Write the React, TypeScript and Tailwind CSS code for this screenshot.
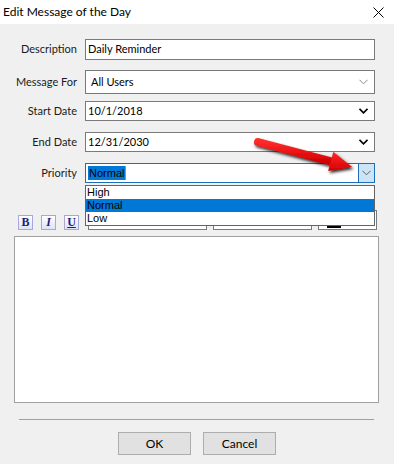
import React from 'react';

const ui = "font-['Lato',sans-serif]";
const swing = "font-['Liberation_Sans',Arial,sans-serif]";

function Chevron({ tone }: { tone: 'light' | 'bold' | 'mid' }) {
  const stroke = tone === 'bold' ? '#000' : tone === 'mid' ? '#606060' : '#8a8a8a';
  const width = tone === 'bold' ? 1.6 : 1;
  return (
    <svg width="9" height="6" viewBox="0 0 9 6" className="shrink-0">
      <path d="M0.5 0.8 L4.5 4.8 L8.5 0.8" fill="none" stroke={stroke} strokeWidth={width} />
    </svg>
  );
}

function Label({ children }: { children: React.ReactNode }) {
  return <div className="w-[78px] pr-[1px] text-right text-[11px] text-[#1a1a1a]">{children}</div>;
}

function FormatButton({ children, className }: { children: React.ReactNode; className?: string }) {
  return (
    <div
      className={`w-[15px] h-[15px] flex items-center justify-center border border-[#a8a8d8] bg-gradient-to-b from-white to-[#dfe3f5] text-[12px] leading-none text-[#1c1c80] font-['Liberation_Serif',serif] font-bold ${className ?? ''}`}
    >
      {children}
    </div>
  );
}

function RedArrow() {
  return (
    <svg width="120" height="50" viewBox="0 0 120 50" className="absolute left-[250px] top-[130px] z-20 pointer-events-none">
      <defs>
        <filter id="arrowShadow" x="-20%" y="-40%" width="140%" height="180%">
          <feDropShadow dx="1.5" dy="2" stdDeviation="1.6" floodColor="#000" floodOpacity="0.85" />
        </filter>
        <linearGradient id="arrowFill" x1="0" y1="0" x2="0" y2="1">
          <stop offset="0" stopColor="#ff2a2a" />
          <stop offset="1" stopColor="#d40000" />
        </linearGradient>
      </defs>
      <g filter="url(#arrowShadow)">
        <line x1="8" y1="12" x2="81" y2="31.4" stroke="url(#arrowFill)" strokeWidth="8" strokeLinecap="round" />
        <polygon points="83.3,21.7 102,37 78.2,41 " fill="url(#arrowFill)" />
      </g>
    </svg>
  );
}

export default function App() {
  return (
    <div className={`relative w-[394px] h-[464px] overflow-hidden bg-[#f0f0f0] ${ui}`}>
      {/* title bar */}
      <div className="h-[24px] bg-white flex items-center justify-between pl-[3px] pr-[10px]">
        <span className="text-[12px] text-black">Edit Message of the Day</span>
        <svg width="11" height="11" viewBox="0 0 11 11">
          <path d="M0.5 0.5 L10.5 10.5 M10.5 0.5 L0.5 10.5" stroke="#000" strokeWidth="1" />
        </svg>
      </div>

      {/* form rows */}
      <div className="flex flex-col pt-[15px]">
        <div className="flex items-center gap-[7px]">
          <Label>Description</Label>
          <div className="w-[290px] h-[21px] bg-white border border-[#7a7a7a] flex items-center pl-[2px] text-[11px] text-black">
            Daily Reminder
          </div>
        </div>

        <div className="flex items-center gap-[7px] mt-[10px]">
          <Label>Message For</Label>
          <div className="w-[290px] h-[24px] bg-white border border-[#7a7a7a] flex items-center justify-between pl-[5px] pr-[6px] text-[11px] text-black">
            <span>All Users</span>
            <Chevron tone="light" />
          </div>
        </div>

        <div className="flex items-center gap-[7px] mt-[7px]">
          <Label>Start Date</Label>
          <div className="w-[290px] h-[20px] bg-white border border-[#7a7a7a] flex items-center justify-between pl-[2px] pr-[6px] text-[11px] text-black">
            <span>10/1/2018</span>
            <Chevron tone="bold" />
          </div>
        </div>

        <div className="flex items-center gap-[7px] mt-[11px]">
          <Label>End Date</Label>
          <div className="w-[290px] h-[20px] bg-white border border-[#7a7a7a] flex items-center justify-between pl-[2px] pr-[6px] text-[11px] text-black">
            <span>12/31/2030</span>
            <Chevron tone="bold" />
          </div>
        </div>

        <div className="flex items-center gap-[7px] mt-[11px]">
          <Label>Priority</Label>
          <div className="relative w-[290px] h-[20px]">
            <div className="h-full bg-white border border-[#1f6fb8] flex items-stretch">
              <div className={`flex-1 flex items-center pl-[2px] text-[11px] ${swing}`}>
                <span className="bg-[#0078d7] text-black leading-[14px] px-[1px] border-r border-[#e08040]">Normal</span>
              </div>
              <div className="w-[16px] bg-[#cce4f7] border-l border-[#1f6fb8] flex items-center justify-center">
                <Chevron tone="mid" />
              </div>
            </div>
            {/* open list */}
            <div className={`absolute left-0 top-[22px] z-10 w-[290px] bg-white border border-[#646464] text-[11px] text-black ${swing}`}>
              <div className="h-[13px] leading-[13px] pl-[1px]">High</div>
              <div className="h-[13px] leading-[13px] pl-[1px] bg-[#0078d7]">Normal</div>
              <div className="h-[13px] leading-[13px] pl-[1px]">Low</div>
            </div>
          </div>
        </div>

        {/* formatting toolbar */}
        <div className="flex items-center h-[20px] mt-[27px] pl-[18px]">
          <div className="flex items-center gap-[8px] mt-[4px]">
            <FormatButton>B</FormatButton>
            <FormatButton className="italic">I</FormatButton>
            <FormatButton className="underline">U</FormatButton>
          </div>
          <div className="ml-[9px] w-[119px] h-[20px] bg-white border border-[#7a7a7a]" />
          <div className="ml-[6px] w-[99px] h-[20px] bg-white border border-[#7a7a7a]" />
          <div className="ml-[6px] w-[59px] h-[20px] bg-white border border-[#7a7a7a] relative">
            <div className="absolute left-[8px] bottom-[1px] w-[14px] h-[3px] bg-black" />
          </div>
        </div>

        {/* message body */}
        <div className="ml-[14px] mt-[6px] w-[365px] h-[167px] bg-white border border-[#a0a0a0]" />

        <div className="ml-[19px] mt-[16px] w-[355px] h-[1px] bg-[#a0a0a0]" />

        <div className="flex justify-center gap-[12px] mt-[12px]">
          <button className="w-[73px] h-[23px] bg-[#e1e1e1] border border-[#adadad] text-[12px] text-black">OK</button>
          <button className="w-[73px] h-[23px] bg-[#e1e1e1] border border-[#adadad] text-[12px] text-black">Cancel</button>
        </div>
      </div>

      <RedArrow />
    </div>
  );
}
